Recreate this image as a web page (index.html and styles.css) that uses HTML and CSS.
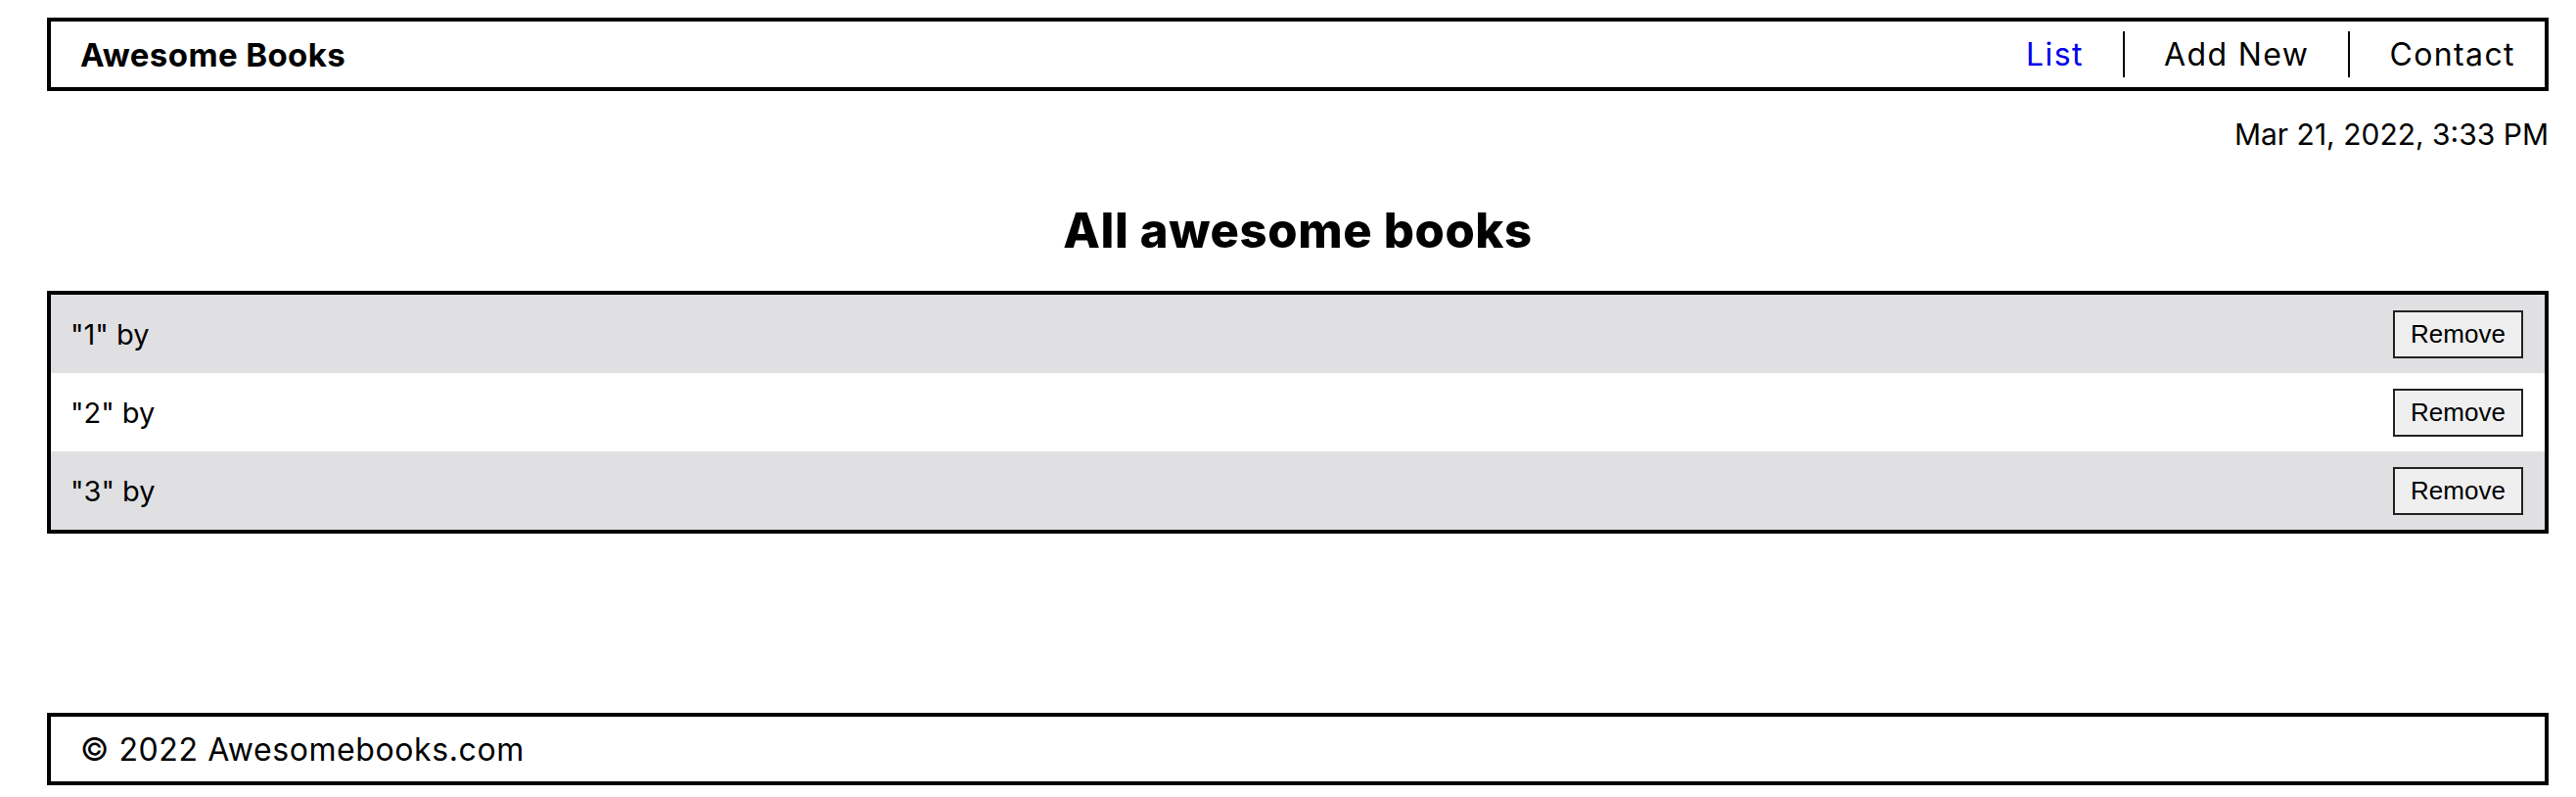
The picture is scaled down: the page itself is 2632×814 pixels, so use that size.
FILE: index.html
```html
<!DOCTYPE html>
<html lang="en">
<head>
<meta charset="utf-8">
<title>Awesome Books</title>
<link rel="stylesheet" href="styles.css">
</head>
<body>
<div class="page">
  <header class="topbar">
    <div class="brand">Awesome Books</div>
    <nav class="nav">
      <a class="nav-link active" href="#">List</a>
      <a class="nav-link" href="#">Add New</a>
      <a class="nav-link" href="#">Contact</a>
    </nav>
  </header>
  <div class="date">Mar 21, 2022, 3:33 PM</div>
  <main class="content">
    <h1 class="title">All awesome books</h1>
    <ul class="books">
      <li class="book"><span class="book-text">"1" by</span><button class="remove">Remove</button></li>
      <li class="book"><span class="book-text">"2" by</span><button class="remove">Remove</button></li>
      <li class="book"><span class="book-text">"3" by</span><button class="remove">Remove</button></li>
    </ul>
  </main>
  <footer class="footer">© 2022 Awesomebooks.com</footer>
</div>
</body>
</html>
```

FILE: styles.css
```css
* { box-sizing: border-box; }
html, body { margin: 0; padding: 0; background: #fff; }
body {
  font-family: Inter, "Open Sans", sans-serif;
  color: #000;
}
.page {
  height: 814px;
  padding: 18px 28px 12px 48px;
  display: flex;
  flex-direction: column;
}
.topbar {
  height: 75px;
  border: 4px solid #000;
  display: flex;
  align-items: center;
  justify-content: space-between;
  padding: 0 30px 0 30px;
}
.brand {
  font-weight: 700;
  font-size: 33px;
  letter-spacing: 0.4px;
}
.nav {
  display: flex;
  align-items: center;
}
.nav-link {
  font-size: 32px;
  letter-spacing: 1.4px;
  color: #000;
  text-decoration: none;
  padding: 0 40px;
  line-height: 47px;
}
.nav-link + .nav-link { border-left: 2px solid #000; }
.nav-link:first-child { padding-left: 0; }
.nav-link:last-child { padding-right: 0; }
.nav-link.active { color: #0000ee; }
.date {
  text-align: right;
  font-size: 30px;
  margin-top: 26px;
  line-height: 36px;
}
.content { display: flex; flex-direction: column; }
.title {
  margin: 53px 0 0;
  text-align: center;
  font-size: 49px;
  letter-spacing: 0.6px;
  font-weight: 800;
  line-height: 56px;
}
.books {
  list-style: none;
  margin: 33px 0 0;
  padding: 0;
  border: 4px solid #000;
}
.book {
  height: 80px;
  display: flex;
  align-items: center;
  justify-content: space-between;
  padding: 0 22px 0 20px;
  background: #fff;
}
.book:nth-child(odd) { background: #e0e0e2; }
.book-text { font-size: 29px; }
.remove {
  font-family: "Liberation Sans", Arial, sans-serif;
  font-size: 26px;
  height: 49px;
  width: 133px;
  padding: 0;
  background: #efefef;
  border: 2px solid #222;
  color: #000;
}
.footer {
  margin-top: auto;
  height: 74px;
  border: 4px solid #000;
  display: flex;
  align-items: center;
  padding: 0 30px;
  font-size: 32px;
  letter-spacing: 0.6px;
}
```
